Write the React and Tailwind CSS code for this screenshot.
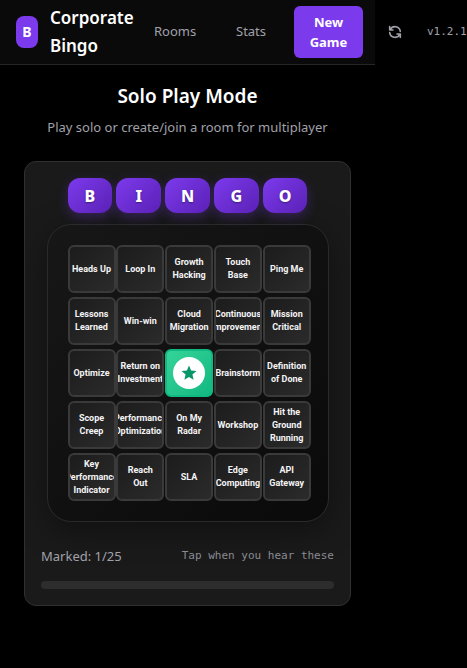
import React from "react";
import { MdStar } from "react-icons/md";

const LETTERS = ["B", "I", "N", "G", "O"];

const CELLS = [
  "Heads Up", "Loop In", "Growth Hacking", "Touch Base", "Ping Me",
  "Lessons Learned", "Win-win", "Cloud Migration", "Continuous Improvement", "Mission Critical",
  "Optimize", "Return on Investment", null, "Brainstorm", "Definition of Done",
  "Scope Creep", "Performance Optimization", "On My Radar", "Workshop", "Hit the Ground Running",
  "Key Performance Indicator", "Reach\nOut", "SLA", "Edge Computing", "API Gateway",
];

function RefreshIcon() {
  return (
    <svg viewBox="0 0 24 24" className="size-4" fill="none" stroke="currentColor" strokeWidth="2.4" strokeLinecap="round" strokeLinejoin="round" aria-hidden="true">
      <path d="M4 4v5h.582m15.356 2A8.001 8.001 0 004.582 9m0 0H9m11 11v-5h-.581m0 0a8.003 8.003 0 01-15.357-2m15.357 2H15" />
    </svg>
  );
}

function Header() {
  return (
    <header className="flex h-[65px] items-center border-b border-[#262626] bg-[#0a0a0a] px-4">
      <div className="flex shrink-0 items-center gap-3">
        <div className="flex h-8 w-[22px] items-center justify-center rounded-lg bg-[#7c3aed] text-sm font-bold">B</div>
        <h1 className="w-[82px] text-[17px] leading-7 font-semibold">Corporate Bingo</h1>
      </div>
      <nav className="ml-[10px] flex shrink-0 items-center">
        <a href="#rooms" className="w-[82px] px-3 text-[13px] text-[#a1a1aa]">Rooms</a>
        <a href="#stats" className="w-[70px] px-3 text-[13px] text-[#a1a1aa]">Stats</a>
        <button type="button" className="w-[69px] rounded-md bg-[#7c3aed] px-3 py-[6px] text-center text-[13px] leading-5 font-bold">New Game</button>
        <button type="button" aria-label="Refresh" className="ml-4 p-2 text-[#a1a1aa]"><RefreshIcon /></button>
        <span className="ml-4 font-['DejaVu_Sans_Mono',monospace] text-[11px] text-[#a1a1aa]">v1.2.1</span>
      </nav>
    </header>
  );
}

function Cell({ label }) {
  if (label === null) {
    return (
      <button type="button" aria-label="Free space" aria-pressed="true" className="flex h-12 min-w-12 items-center justify-center rounded-md border-2 border-[#10b981] bg-linear-135 from-[#34d399] to-[#10b981]">
        <span className="flex size-8 shrink-0 items-center justify-center rounded-full bg-white text-[#059669]">
          <MdStar className="size-[18px]" />
        </span>
      </button>
    );
  }
  return (
    <button type="button" className="flex h-12 min-w-12 items-center justify-center overflow-hidden rounded-md border-2 border-[#3a3a3a] bg-linear-135 from-[#1c1c1c] to-[#2b2b2b] font-[Roboto,sans-serif] text-[9px] leading-[13px] font-bold text-[#f4f4f5]">
      <span className="text-center whitespace-pre-line">{label}</span>
    </button>
  );
}

export default function App() {
  return (
    <div className="min-h-screen overflow-hidden bg-black font-['Noto_Sans','Open_Sans',sans-serif] text-white">
      <div className="max-w-[375px]">
        <Header />
        <main className="px-6 pt-4">
          <div className="text-center">
            <h2 className="text-[19px] leading-[30px] font-semibold">Solo Play Mode</h2>
            <p className="mt-[6px] text-[13px] leading-5 whitespace-nowrap text-[#a1a1aa]">Play solo or create/join a room for multiplayer</p>
          </div>
          <section className="mt-6 rounded-xl border border-[#303030] bg-[#1a1a1a] p-4">
            <div className="mx-auto grid max-w-[240px] grid-cols-5 gap-1">
              {LETTERS.map((l) => (
                <div key={l} className="flex h-[35px] items-center justify-center rounded-xl bg-linear-135 from-[#7c3aed] to-[#5b21b6] text-base font-extrabold shadow-[0_4px_12px_rgba(124,58,237,0.3)] text-shadow-[0_1px_2px_rgba(0,0,0,0.4)]">{l}</div>
              ))}
            </div>
            <div className="mx-auto mt-[11px] max-w-[282px] rounded-3xl border border-[#2a2a2a] bg-linear-135 from-[#171717] to-[#0a0a0a] p-5 shadow-[0_8px_32px_rgba(0,0,0,0.4)]">
              <div className="grid grid-cols-[repeat(5,minmax(0,1fr))] gap-1">
                {CELLS.map((c, i) => <Cell key={i} label={c} />)}
              </div>
            </div>
            <div className="mt-6 flex items-center justify-between">
              <span id="marked" className="text-[13px] leading-5 text-[#a1a1aa]">Marked: 1/25</span>
              <span className="font-['DejaVu_Sans_Mono',monospace] text-[11px] leading-5 text-[#8a8a92]">Tap when you hear these</span>
            </div>
            <div role="progressbar" aria-labelledby="marked" aria-valuemin={0} aria-valuemax={25} aria-valuenow={1} className="mt-[15px] h-2 rounded-full bg-[#2d2d2d]" />
          </section>
        </main>
      </div>
    </div>
  );
}
